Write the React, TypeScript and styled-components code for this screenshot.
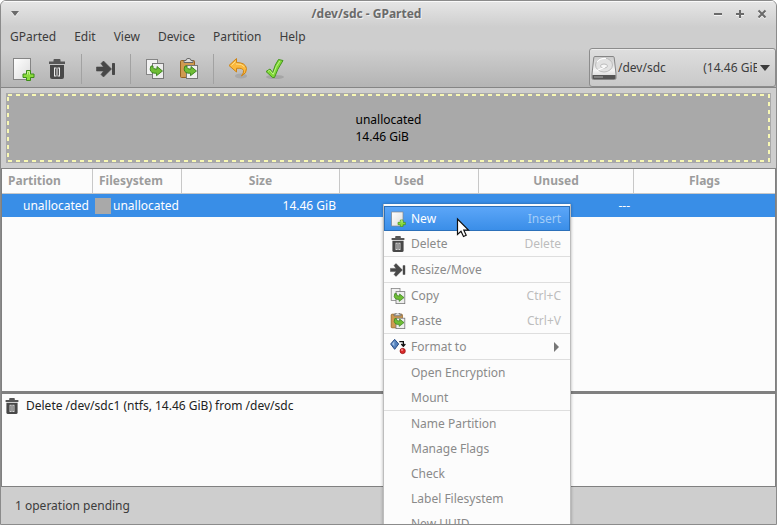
import React from 'react';
import styled, { createGlobalStyle } from 'styled-components';

const GlobalStyle = createGlobalStyle`
  * { box-sizing: border-box; }
  body { margin: 0; background: #fff; }
  body, button, select, table { font: 12px/18px "Noto Sans", sans-serif; color: #3c3c3c; }
  button { appearance: none; border: 0; background: none; padding: 0; margin: 0; }
`;

const Window = styled.div`
  position: relative;
  display: flex;
  flex-direction: column;
  height: 100vh;
  overflow: hidden;
  background: #cecece;
  border: 1px solid #8b8b8b;
  border-radius: 6px 6px 0 0;
`;

const Header = styled.header`
  display: flex;
  flex-direction: column;
  flex: none;
  box-shadow: inset 0 1px #fafafa;
  border-bottom: 1px solid #858585;
  background: linear-gradient(#e6e6e6 0, #cecece 26px, #cecece 48px, #b4b4b4 100%);
`;

const TitleBar = styled.div`
  display: grid;
  grid-template-columns: 36px 1fr 80px;
  align-items: center;
  height: 25px;
`;

const Title = styled.h1`
  margin: 0;
  font-size: 12px;
  line-height: 18px;
  text-align: center;
  color: #6a6a6a;
  text-shadow: 1px 1px #f0f0f0;
`;

const TitleGroup = styled.div<{ $end?: boolean }>`
  display: flex;
  justify-content: ${(p) => (p.$end ? 'flex-end' : 'flex-start')};
  padding: 0 3px;
`;

const TitleButton = styled.button`
  display: grid;
  place-items: center;
  width: 22px;
  height: 20px;
  color: #6a6a6a;
  svg { filter: drop-shadow(0 1px 0 #f4f4f4); }
`;

const MenuBar = styled.nav`
  display: flex;
  height: 22px;
`;

const MenuBarItem = styled.button`
  padding: 0 9px;
  height: 22px;
`;

const ToolRow = styled.div`
  display: flex;
  justify-content: space-between;
  height: 39px;
`;

const Tools = styled.div`
  display: flex;
  align-items: center;
  padding: 2px 0 0 5px;
`;

const ToolButton = styled.button`
  display: grid;
  place-items: center;
  width: 34px;
  height: 32px;
`;

const ToolDivider = styled.span`
  width: 1px;
  height: 30px;
  margin: 0 7px;
  background: #a2a2a2;
`;

const DevicePicker = styled.label`
  display: flex;
  align-items: center;
  width: 187px;
  height: 39px;
  padding: 1px 5px 0 1px;
  border: 1px solid #8c8c8c;
  border-radius: 3px;
  background: linear-gradient(#dedede, #c9c9c9);
  box-shadow: inset 0 1px #ececec;
`;

const DeviceSelect = styled.select`
  appearance: none;
  flex: 1;
  min-width: 0;
  height: 24px;
  padding: 0;
  margin: 0 3px 0 1px;
  border: 0;
  background: none;
  white-space: pre;
  text-overflow: clip;
`;

const dashH = 'repeating-linear-gradient(90deg, #f8f8b4 0 4px, transparent 4px 8px)';
const dashV = 'repeating-linear-gradient(#f8f8b4 0 4px, transparent 4px 8px)';

const DiskMap = styled.section`
  flex: none;
  padding: 5px 5px;
  border-bottom: 1px solid #858585;
`;

const DiskSegment = styled.div`
  display: grid;
  place-items: center;
  height: 70px;
  color: #000;
  background:
    ${dashH} 2px 1px / calc(100% - 4px) 2px no-repeat,
    ${dashH} 2px calc(100% - 1px) / calc(100% - 4px) 2px no-repeat,
    ${dashV} 1px 4px / 2px calc(100% - 6px) no-repeat,
    ${dashV} calc(100% - 1px) 1px / 2px calc(100% - 2px) no-repeat,
    #a9a9a9;
  line-height: 17px;
`;

const PartitionPane = styled.main`
  flex: 1;
  min-height: 0;
  background: #fcfcfc;
  border: solid #808080;
  border-width: 0 1px;
`;

const PartitionTable = styled.table`
  width: 100%;
  table-layout: fixed;
  border-collapse: separate;
  border-spacing: 0;
`;

const Column = styled.col<{ $width?: number }>`
  width: ${(p) => (p.$width ? `${p.$width}px` : 'auto')};
`;

const HeadCell = styled.th<{ $left?: boolean }>`
  height: 25px;
  padding: 0 6px;
  text-align: ${(p) => (p.$left ? 'left' : 'center')};
  color: #9c9c9c;
  border-right: 1px solid #c8c8c8;
  border-bottom: 1px solid #c8c8c8;
  &:last-child { border-right: 0; }
`;

const Cell = styled.td`
  height: 23px;
  padding: 0 4px 0 3px;
  text-align: right;
  color: #fff;
  background: #398ee7;
`;

const FsLabel = styled.div`
  display: flex;
  align-items: center;
  gap: 2px;
`;

const FsSwatch = styled.span`
  flex: none;
  width: 16px;
  height: 16px;
  margin-left: -1px;
  background: #a9a9a9;
`;

const OperationsPane = styled.section`
  flex: none;
  height: 96px;
  background: #fcfcfc;
  border: solid #808080;
  border-width: 3px 1px 1px;
`;

const OperationList = styled.ul`
  list-style: none;
  margin: 0;
  padding: 3px 2px;
`;

const Operation = styled.li`
  display: flex;
  align-items: center;
  gap: 6px;
  color: #222;
`;

const StatusBar = styled.footer`
  flex: none;
  height: 37px;
  padding: 10px 14px;
`;

const ContextMenu = styled.div`
  position: absolute;
  left: 382px;
  top: 203px;
  width: 188px;
  padding-top: 2px;
  background: #fcfcfc;
  border: solid #bdbdbd;
  border-width: 0 1px;
  box-shadow: 0 0 3px rgba(0, 0, 0, 0.3);
`;

const MenuItem = styled.button<{ $active?: boolean }>`
  display: grid;
  grid-template-columns: 16px 1fr auto;
  align-items: center;
  gap: 5px;
  width: 100%;
  height: 25px;
  padding: 0 8px 0 5px;
  text-align: left;
  border: 1px solid ${(p) => (p.$active ? '#2c70b9' : 'transparent')};
  background: ${(p) => (p.$active ? 'linear-gradient(#5ca6f8, #3a8ee8)' : 'none')};
  color: ${(p) => (p.$active ? '#fff' : '#8a8a8a')};
`;

const IconSlot = styled.span`
  display: grid;
  height: 16px;
`;

const Shortcut = styled.span<{ $active?: boolean }>`
  color: ${(p) => (p.$active ? '#a3cdf8' : '#bdbdbd')};
`;

const SubmenuArrow = styled.svg`
  margin-right: 2px;
`;

const MenuDivider = styled.hr`
  height: 1px;
  margin: 0;
  border: 0;
  background: #dedede;
`;

const Pointer = styled.svg`
  position: absolute;
  left: 455px;
  top: 216px;
`;

type IconProps = { size?: number };

const Svg = ({ size = 24, tight, children }: IconProps & { tight?: boolean; children: React.ReactNode }) => (
  <svg width={size} height={size} viewBox={tight && size < 24 ? '2 2 20 20' : '0 0 24 24'} aria-hidden="true">
    {children}
  </svg>
);

const NewIcon = ({ size }: IconProps) => (
  <Svg size={size}>
    <defs>
      <linearGradient id="paper" x2="1" y2="1"><stop stopColor="#fff" /><stop offset="1" stopColor="#dcdcdc" /></linearGradient>
    </defs>
    <rect x="2.5" y="1.5" width="17" height="21" fill="url(#paper)" stroke="#858585" />
    <path d="M15.5 13.5h4V17H23v3.500h-3.500v3h-4v-3H12V17h3.500z" fill="#8bdc3b" stroke="#3d8c18" strokeLinejoin="round" />
    <path d="M16.500 17.500v-3h2v3" fill="none" stroke="#c5f291" />
  </Svg>
);

const TrashIcon = ({ size }: IconProps) => (
  <Svg size={size} tight>
    <path d="M4 4.500h4.500V3q0-1 1-1h5q1 0 1 1v1.500H20V7H4z" fill="#565656" />
    <path d="M5 8h14v12q0 2-2 2H7q-2 0-2-2z" fill="#484848" />
    <path d="M9 10.500h6v9H9z" fill="#eee" />
    <path d="M10 11.500h1v7h-1zM13 11.500h1v7h-1z" fill="#555" />
    <path d="M11.500 10h1v10h-1z" fill="#484848" />
  </Svg>
);

const ResizeIcon = ({ size }: IconProps) => (
  <Svg size={size} tight>
    <path d="M2.500 10h7L7 6.500 9.500 4l8 8-8 8L7 17.500 9.500 14h-7z" fill="#484848" stroke="#484848" strokeWidth=".6" strokeLinejoin="round" />
    <rect x="18" y="6" width="3" height="12" rx=".7" fill="#484848" />
  </Svg>
);

const GreenArrow = () => (
  <path d="M9.500 10.500q-2 4.500 1 6.500 1.500 1 4.500.700v2.500l6-4.700-5.500-4.500v2.500q-4.500.500-4-3z" fill="#6fbd35" stroke="#37801b" strokeWidth=".9" strokeLinejoin="round" />
);

const CopyIcon = ({ size }: IconProps) => (
  <Svg size={size} tight>
    <rect x="3.500" y="2.500" width="11" height="15" fill="#f2f2f2" stroke="#858585" />
    <rect x="9.500" y="6.500" width="11" height="15" fill="#ededed" stroke="#777" />
    <g transform="translate(-1.500 -1.500)"><GreenArrow /></g>
  </Svg>
);

const PasteIcon = ({ size }: IconProps) => (
  <Svg size={size} tight>
    <rect x="3.500" y="3.500" width="14" height="17" rx="1" fill="#cf9a50" stroke="#946323" />
    <path d="M7 5.500V3.500h2q0-2 2-2h1q2 0 2 2h2v2z" fill="#ddd" stroke="#666" />
    <rect x="9.500" y="8.500" width="11" height="13" fill="#efefef" stroke="#777" />
    <g transform="translate(-1.500 -1.500)"><GreenArrow /></g>
  </Svg>
);

const UndoIcon = () => (
  <Svg>
    <ellipse cx="15" cy="19" rx="6" ry="2.500" fill="#9c9c9c" opacity=".6" />
    <path d="M10.500 1.500 3 8.500l7.500 6.500v-3.700q6-.600 7 2.200.500 2.300-2 5.500 5.500-2.800 5-7.500Q19.500 5.500 10.500 5.500z" fill="#fbb93e" stroke="#cd8416" strokeLinejoin="round" />
    <path d="M9.500 4.500 5.500 8.500M10 7q6-.5 8.500 3" fill="none" stroke="#ffdc85" />
  </Svg>
);

const ApplyIcon = () => (
  <Svg>
    <ellipse cx="15" cy="20" rx="9" ry="2" fill="#8f8f8f" opacity=".5" />
    <path d="m6 14.500 4-2.500 2.700 3.500Q15 7 18.500 2.500l4.500 1Q17 12.500 14.500 20.500h-2z" fill="#80d936" stroke="#44951e" strokeLinejoin="round" />
    <path d="m8 14.300 1.700-1 3.500 4Q16 8.500 20 3.800" fill="none" stroke="#bdf286" />
  </Svg>
);

const FormatIcon = ({ size }: IconProps) => (
  <Svg size={size}>
    <path d="m7 .5 6 7-6 8-6-8z" fill="#5582bc" stroke="#274c85" strokeWidth="1.500" />
    <path d="m6.500 3-3.500 4.500 3.500 3.500z" fill="#a5c4e8" />
    <path d="M14 4h6v6m-3-2.500 3 3.500 3-3.500" fill="none" stroke="#111" strokeWidth="2" />
    <circle cx="19" cy="18" r="4" fill="#d92a2a" stroke="#8f0c0c" />
    <circle cx="18" cy="16.500" r="1.500" fill="#fa8e8e" />
  </Svg>
);

const DriveIcon = () => (
  <svg width="26" height="26" viewBox="0 0 26 26" aria-hidden="true">
    <defs>
      <linearGradient id="drive" y2="1" x2="0"><stop stopColor="#c9c9c9" /><stop offset=".6" stopColor="#f5f5f5" /><stop offset="1" stopColor="#ccc" /></linearGradient>
    </defs>
    <path d="M4 1.500h18q1 0 1.200 1L25 19v4q0 1.500-1.500 1.500h-21Q1 24.500 1 23v-4L2.800 2.500q.200-1 1.200-1z" fill="url(#drive)" stroke="#858585" />
    <path d="M1.500 20h23v3q0 1-1 1h-21q-1 0-1-1z" fill="#555" />
    <path d="M3 22h9" stroke="#aaa" />
    <ellipse cx="13" cy="10" rx="8.500" ry="7" fill="#e2e2e2" stroke="#bcbcbc" />
    <ellipse cx="13" cy="11" rx="3.500" ry="2" fill="#f7f7f7" stroke="#bbb" />
    <path d="m14 12-8 3.500M6 7q3-4 9-3.500" stroke="#fff" fill="none" strokeWidth="1.200" />
  </svg>
);

const menus = ['GParted', 'Edit', 'View', 'Device', 'Partition', 'Help'];

const tools: [string, React.ReactNode][][] = [
  [['New', <NewIcon />], ['Delete', <TrashIcon />]],
  [['Resize/Move', <ResizeIcon />]],
  [['Copy', <CopyIcon />], ['Paste', <PasteIcon />]],
  [['Undo', <UndoIcon />], ['Apply', <ApplyIcon />]],
];

type Entry = { label: string; icon?: React.ReactNode; keys?: string; submenu?: boolean; active?: boolean };

const entries: Entry[][] = [
  [
    { label: 'New', icon: <NewIcon size={16} />, keys: 'Insert', active: true },
    { label: 'Delete', icon: <TrashIcon size={16} />, keys: 'Delete' },
  ],
  [{ label: 'Resize/Move', icon: <ResizeIcon size={16} /> }],
  [
    { label: 'Copy', icon: <CopyIcon size={16} />, keys: 'Ctrl+C' },
    { label: 'Paste', icon: <PasteIcon size={16} />, keys: 'Ctrl+V' },
  ],
  [{ label: 'Format to', icon: <FormatIcon size={16} />, submenu: true }],
  [{ label: 'Open Encryption' }, { label: 'Mount' }],
  [{ label: 'Name Partition' }, { label: 'Manage Flags' }, { label: 'Check' }, { label: 'Label Filesystem' }, { label: 'New UUID' }],
];

const columns: { name: string; width?: number; left?: boolean }[] = [
  { name: 'Partition', width: 91, left: true },
  { name: 'Filesystem', width: 89, left: true },
  { name: 'Size', width: 158 },
  { name: 'Used', width: 139 },
  { name: 'Unused', width: 155 },
  { name: 'Flags' },
];

const deviceLabel = `/dev/sdc${'\u00a0'.repeat(12)}(14.46 GiB)`;

export default function App() {
  return (
    <>
      <GlobalStyle />
      <Window>
        <Header>
          <TitleBar>
            <TitleGroup>
              <TitleButton aria-label="Window menu">
                <svg width="8" height="5"><path d="M0 0h8L4 5z" fill="currentColor" /></svg>
              </TitleButton>
            </TitleGroup>
            <Title>/dev/sdc - GParted</Title>
            <TitleGroup $end>
              <TitleButton aria-label="Minimize">
                <svg width="10" height="10"><path d="M1 5h8" stroke="currentColor" strokeWidth="2" /></svg>
              </TitleButton>
              <TitleButton aria-label="Maximize">
                <svg width="10" height="10"><path d="M1 5h8M5 1v8" stroke="currentColor" strokeWidth="2" /></svg>
              </TitleButton>
              <TitleButton aria-label="Close">
                <svg width="10" height="10"><path d="m1.500 1.500 7 7m0-7-7 7" stroke="currentColor" strokeWidth="2" /></svg>
              </TitleButton>
            </TitleGroup>
          </TitleBar>
          <MenuBar>
            {menus.map((m) => <MenuBarItem key={m}>{m}</MenuBarItem>)}
          </MenuBar>
          <ToolRow>
            <Tools role="toolbar">
              {tools.map((group, i) => (
                <React.Fragment key={i}>
                  {i > 0 && <ToolDivider />}
                  {group.map(([label, icon]) => (
                    <ToolButton key={label} aria-label={label}>{icon}</ToolButton>
                  ))}
                </React.Fragment>
              ))}
            </Tools>
            <DevicePicker>
              <DriveIcon />
              <DeviceSelect aria-label="Device">
                <option>{deviceLabel}</option>
              </DeviceSelect>
              <svg width="10" height="6" aria-hidden="true"><path d="M0 0h10L5 6z" fill="#3c3c3c" /></svg>
            </DevicePicker>
          </ToolRow>
        </Header>

        <DiskMap>
          <DiskSegment>
            <div>unallocated<br />14.46 GiB</div>
          </DiskSegment>
        </DiskMap>

        <PartitionPane>
          <PartitionTable>
            <colgroup>
              {columns.map((c) => <Column key={c.name} $width={c.width} />)}
            </colgroup>
            <thead>
              <tr>{columns.map((c) => <HeadCell key={c.name} $left={c.left} scope="col">{c.name}</HeadCell>)}</tr>
            </thead>
            <tbody>
              <tr>
                <Cell>unallocated</Cell>
                <Cell><FsLabel><FsSwatch />unallocated</FsLabel></Cell>
                <Cell>14.46 GiB</Cell>
                <Cell>---</Cell>
                <Cell>---</Cell>
                <Cell />
              </tr>
            </tbody>
          </PartitionTable>
        </PartitionPane>

        <OperationsPane>
          <OperationList>
            <Operation><TrashIcon size={16} />Delete /dev/sdc1 (ntfs, 14.46 GiB) from /dev/sdc</Operation>
          </OperationList>
        </OperationsPane>
        <StatusBar role="status">1 operation pending</StatusBar>

        <ContextMenu role="menu">
          {entries.map((group, i) => (
            <React.Fragment key={i}>
              {i > 0 && <MenuDivider />}
              {group.map((e) => (
                <MenuItem key={e.label} role="menuitem" $active={e.active}>
                  <IconSlot>{e.icon}</IconSlot>
                  <span>{e.label}</span>
                  {e.keys && <Shortcut $active={e.active}>{e.keys}</Shortcut>}
                  {e.submenu && <SubmenuArrow width="5" height="10"><path d="M0 0v10l5-5z" fill="#777" /></SubmenuArrow>}
                </MenuItem>
              ))}
            </React.Fragment>
          ))}
        </ContextMenu>
        <Pointer width="14" height="22" viewBox="0 0 14 22" aria-hidden="true">
          <path d="M1.500 2v15.500l3.500-3.200 2.500 5.200 2.700-1.200-2.400-5.100h4.700z" fill="#fff" stroke="#111" strokeWidth="1.200" />
        </Pointer>
      </Window>
    </>
  );
}
